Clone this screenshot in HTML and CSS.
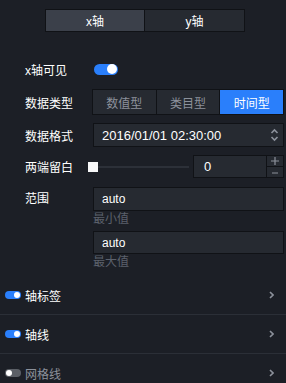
FILE: index.html
```html
<!DOCTYPE html>
<html lang="zh">
<head>
  <meta charset="UTF-8">
  <meta name="viewport" content="width=device-width, initial-scale=1.0">
  <title>坐标轴</title>
  <link rel="stylesheet" href="styles.css">
</head>
<body>
  <div class="tabs">
    <div class="tab active">x轴</div>
    <div class="tab">y轴</div>
  </div>

  <div class="form">
    <div class="row row-visible">
      <div class="label">x轴可见</div>
      <div class="switch on"><span class="knob"></span></div>
    </div>

    <div class="row row-type">
      <div class="label">数据类型</div>
      <div class="segmented">
        <div class="seg">数值型</div>
        <div class="seg">类目型</div>
        <div class="seg active">时间型</div>
      </div>
    </div>

    <div class="row row-format">
      <div class="label">数据格式</div>
      <div class="input select">
        <span>2016/01/01 02:30:00</span>
        <svg class="spin" width="9" height="14" viewBox="0 0 9 14">
          <path d="M1.5 5 L4.5 2 L7.5 5" fill="none" stroke="#8c919b" stroke-width="1.6"/>
          <path d="M1.5 9 L4.5 12 L7.5 9" fill="none" stroke="#8c919b" stroke-width="1.6"/>
        </svg>
      </div>
    </div>

    <div class="row row-padding">
      <div class="label">两端留白</div>
      <div class="slider">
        <span class="handle"></span>
        <span class="track"></span>
      </div>
      <div class="number">
        <div class="number-value">0</div>
        <div class="stepper">
          <div class="step">
            <svg width="8" height="8" viewBox="0 0 8 8"><path d="M0 4 H8 M4 0 V8" stroke="#8c919b" stroke-width="1.2"/></svg>
          </div>
          <div class="step">
            <svg width="6" height="8" viewBox="0 0 6 8"><path d="M0 5 H6" stroke="#8c919b" stroke-width="1"/></svg>
          </div>
        </div>
      </div>
    </div>

    <div class="row row-range">
      <div class="label">范围</div>
      <div class="range">
        <div class="input">auto</div>
        <div class="hint">最小值</div>
        <div class="input second">auto</div>
        <div class="hint">最大值</div>
      </div>
    </div>
  </div>

  <div class="sections">
    <div class="section">
      <div class="mini-switch on"><span></span></div>
      <div class="section-title">轴标签</div>
      <svg class="chevron" width="5" height="8" viewBox="0 0 5 8"><path d="M1 1 L4 4 L1 7" fill="none" stroke="#8c919b" stroke-width="1.6"/></svg>
    </div>
    <div class="section">
      <div class="mini-switch on"><span></span></div>
      <div class="section-title">轴线</div>
      <svg class="chevron" width="5" height="8" viewBox="0 0 5 8"><path d="M1 1 L4 4 L1 7" fill="none" stroke="#8c919b" stroke-width="1.6"/></svg>
    </div>
    <div class="section">
      <div class="mini-switch"><span></span></div>
      <div class="section-title off">网格线</div>
      <svg class="chevron" width="5" height="8" viewBox="0 0 5 8"><path d="M1 1 L4 4 L1 7" fill="none" stroke="#8c919b" stroke-width="1.6"/></svg>
    </div>
  </div>
</body>
</html>
```

FILE: styles.css
```css
body {
  margin: 0;
  width: 286px;
  height: 383px;
  overflow: hidden;
  background-color: #1c1f26;
  color: #ffffff;
  font-family: "Liberation Sans", "Noto Sans CJK SC", sans-serif;
  font-size: 12px;
}

.tabs {
  display: flex;
  padding-top: 9px;
  padding-left: 45px;
}

.tab {
  width: 100px;
  height: 23px;
  box-sizing: border-box;
  border: 1px solid #101216;
  background-color: #262a31;
  display: flex;
  align-items: center;
  justify-content: center;
}

.tab + .tab {
  margin-left: -1px;
  width: 101px;
}

.tab.active {
  background-color: #3b404a;
}

.form {
  padding-left: 25px;
  padding-right: 2px;
}

.row {
  display: flex;
  align-items: center;
}

.label {
  width: 67px;
  flex-shrink: 0;
}

.row-visible {
  margin-top: 26px;
  height: 22px;
}

.switch {
  width: 24px;
  height: 11px;
  border-radius: 6px;
  background-color: #2a7ffb;
  margin-left: 2px;
  position: relative;
}

.switch .knob {
  position: absolute;
  right: 1px;
  top: 0.5px;
  width: 10px;
  height: 10px;
  border-radius: 50%;
  background-color: #ffffff;
}

.row-type {
  margin-top: 9px;
  height: 26px;
}

.segmented {
  display: flex;
  flex: 1;
  height: 26px;
}

.seg {
  flex: 1;
  box-sizing: border-box;
  border: 1px solid #101216;
  background-color: #262a31;
  color: #8c919b;
  display: flex;
  align-items: center;
  justify-content: center;
  font-size: 12px;
}

.seg + .seg {
  margin-left: -1px;
}

.seg.active {
  background-color: #2a7ffb;
  color: #ffffff;
}

.row-format {
  margin-top: 8px;
  height: 24px;
}

.input {
  flex: 1;
  height: 24px;
  box-sizing: border-box;
  border: 1px solid #101216;
  background-color: #262a31;
  padding-left: 8px;
  display: flex;
  align-items: center;
  margin-left: 1px;
}

.select {
  justify-content: space-between;
  padding-right: 4px;
  font-size: 13px;
}

.row-padding {
  margin-top: 8px;
  height: 23px;
}

.slider {
  display: flex;
  align-items: center;
  width: 105px;
  margin-left: -4px;
}

.handle {
  width: 10px;
  height: 10px;
  background-color: #f7f7f8;
}

.track {
  width: 91px;
  height: 2px;
  background-color: #2c3038;
}

.number {
  display: flex;
  flex: 1;
  height: 23px;
}

.number-value {
  flex: 1;
  box-sizing: border-box;
  border: 1px solid #101216;
  background-color: #262a31;
  padding-left: 10px;
  display: flex;
  align-items: center;
  font-size: 13px;
}

.stepper {
  width: 18px;
  display: flex;
  flex-direction: column;
  margin-left: -1px;
}

.step {
  flex: 1;
  box-sizing: border-box;
  border: 1px solid #101216;
  background-color: #262a31;
  display: flex;
  align-items: center;
  justify-content: center;
}

.step + .step {
  margin-top: -1px;
}

.row-range {
  margin-top: 9px;
  align-items: flex-start;
}

.row-range .label {
  line-height: 24px;
}

.range {
  flex: 1;
  display: flex;
  flex-direction: column;
}

.range .input {
  flex: none;
}

.range .input.second {
  margin-top: 4px;
  height: 23px;
}

.hint {
  color: #5b616c;
  height: 16px;
  line-height: 16px;
  padding-left: 1px;
}

.sections {
  margin-top: 6px;
}

.section {
  display: flex;
  align-items: center;
  height: 39px;
  box-sizing: border-box;
  border-bottom: 1px solid #2b2f37;
  padding-left: 5px;
  padding-right: 12px;
}

.mini-switch {
  width: 16px;
  height: 8px;
  border-radius: 4px;
  background-color: #5b5f66;
  position: relative;
  margin-right: 4px;
}

.mini-switch span {
  position: absolute;
  left: 1px;
  top: 1px;
  width: 6px;
  height: 6px;
  border-radius: 50%;
  background-color: #ffffff;
}

.mini-switch.on {
  background-color: #2a7ffb;
}

.mini-switch.on span {
  left: auto;
  right: 1px;
}

.section-title {
  flex: 1;
  font-size: 12px;
}

.section-title.off {
  color: #8c919b;
}
```
